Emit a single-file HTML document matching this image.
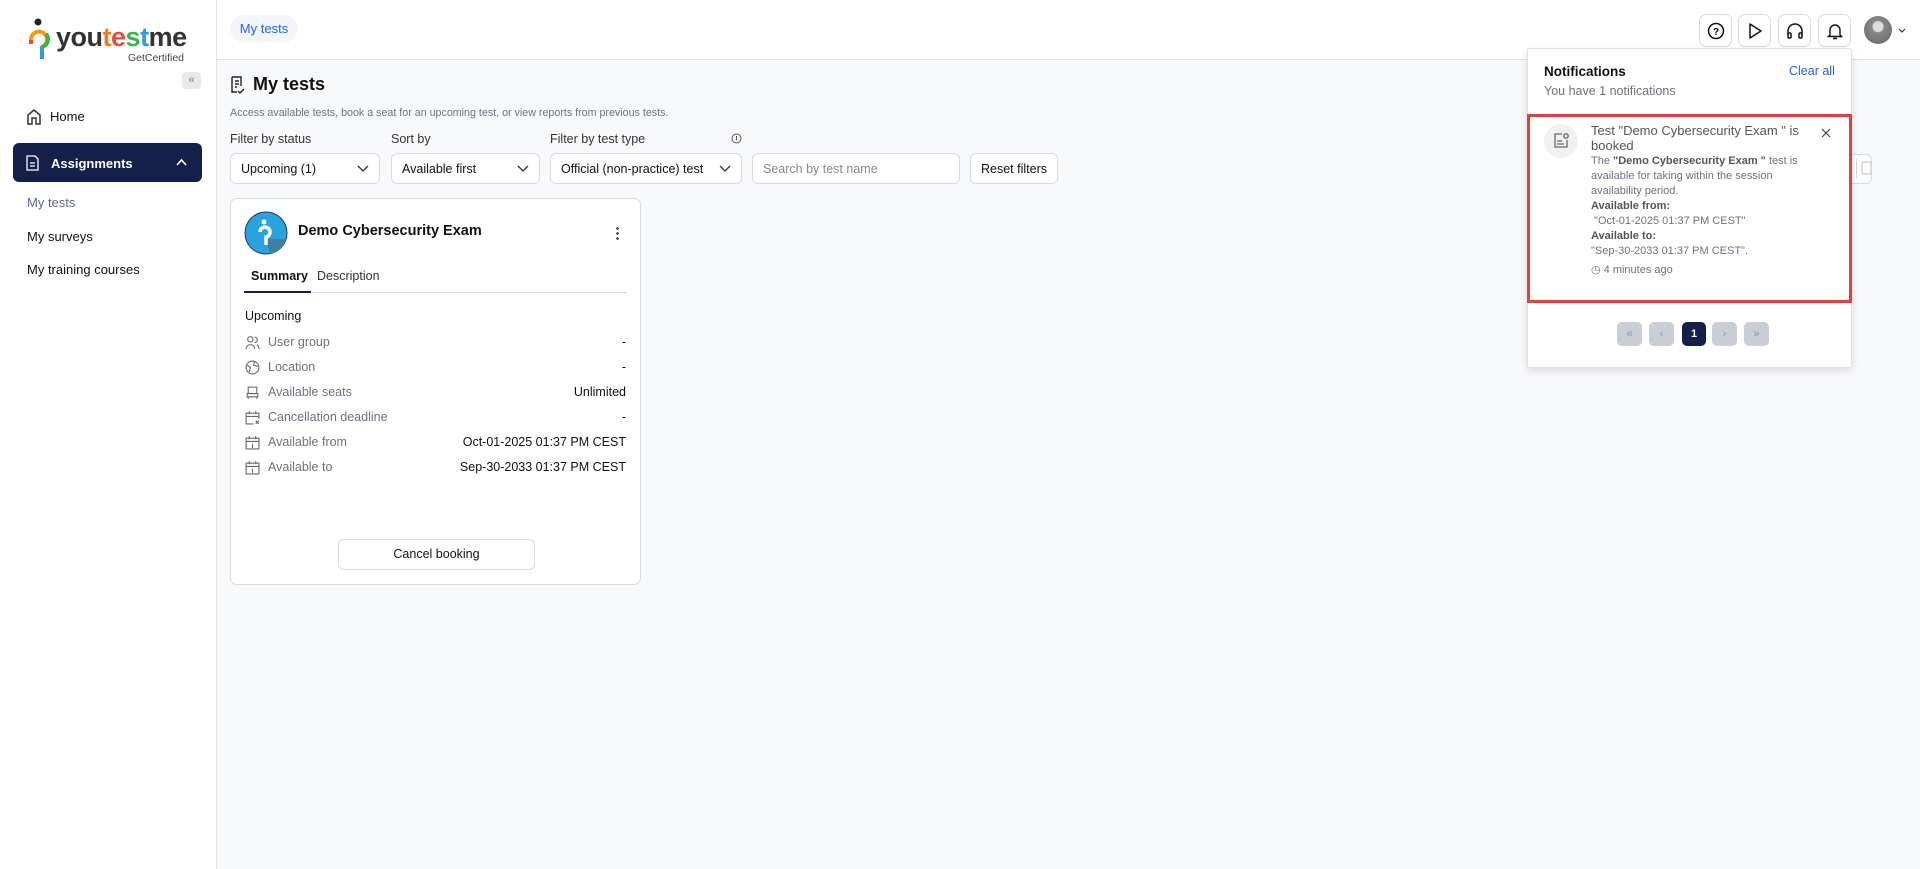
<!DOCTYPE html>
<html><head><meta charset="utf-8"><style>
*{box-sizing:border-box;margin:0;padding:0}
body{width:1920px;height:869px;overflow:hidden;background:#f8f9fb;font-family:"Liberation Sans",sans-serif;color:#111;position:relative}
.abs{position:absolute}
.side{left:0;top:0;width:217px;height:869px;background:#fff;border-right:1px solid #e2e5ea}
.head{left:217px;top:0;width:1703px;height:60px;background:#fff;border-bottom:1px solid #dde1e7}
.nav{font-size:13px;color:#111}
.sel{height:31px;border:1px solid #d5dae1;border-radius:6px;background:#fff;font-size:12.5px;padding:0 10px;display:flex;align-items:center;justify-content:space-between;white-space:nowrap}
.lbl{font-size:12.5px;color:#333}
.row{left:245px;width:381px;height:20px;font-size:12.5px;display:flex;align-items:center}
.row .l{color:#6b7280;margin-left:8px;flex:1}
.row .v{color:#111}
.hb{top:14px;width:33px;height:33px;border:1px solid #d5dae1;border-radius:7px;background:#fff;display:flex;align-items:center;justify-content:center}
.pg{top:322px;width:25px;height:24px;border-radius:5px;background:#c8ced6;display:flex;align-items:center;justify-content:center;color:#8a929c;font-size:11px}
.nt{left:1591px;font-size:11px;color:#6b7280;line-height:15px}
</style></head><body>
<div class="abs side">
  <svg class="abs" style="left:28px;top:18px" width="22" height="46" viewBox="0 0 22 46"><circle cx="10" cy="4" r="3.5" fill="#222"/><path d="M3 22a8 8 0 1 1 11 7v10" fill="none" stroke="#f39c12" stroke-width="4"/><path d="M3 22v4" stroke="#e74c3c" stroke-width="4"/><path d="M14 29v12" stroke="#2e9be6" stroke-width="4"/><path d="M18 16a8 8 0 0 1-4 13" fill="none" stroke="#3cb44b" stroke-width="4"/></svg>
  <div class="abs" style="left:56px;top:22px;font-size:27px;font-weight:bold;letter-spacing:-0.5px;color:#333">you<span style="color:#e67e22">t</span><span style="color:#e74c3c">e</span><span style="color:#3cb44b">s</span><span style="color:#2e9be6">t</span>me</div>
  <div class="abs" style="left:128px;top:52px;font-size:10.5px;color:#444">GetCertified</div>
  <div class="abs" style="left:182px;top:72px;width:19px;height:17px;background:#e6e9ee;border-radius:4px;font-size:11px;color:#777;text-align:center;line-height:16px">«</div>
  <svg class="abs" style="left:26px;top:108px" width="16" height="17" viewBox="0 0 16 17"><path d="M2 16V7l6-5 6 5v9h-4v-6H6v6z" fill="none" stroke="#333" stroke-width="1.5"/></svg>
  <div class="abs nav" style="left:50px;top:109px">Home</div>
  <div class="abs" style="left:13px;top:143px;width:189px;height:39px;background:#14204a;border-radius:6px"></div>
  <svg class="abs" style="left:26px;top:155px" width="13" height="16" viewBox="0 0 13 16"><path d="M1 1h8l3 3v11H1z M4 8h5M4 11h5" fill="none" stroke="#fff" stroke-width="1.3"/></svg>
  <div class="abs" style="left:51px;top:156px;font-size:13px;color:#fff;font-weight:bold">Assignments</div>
  <svg class="abs" style="left:176px;top:158px" width="11" height="8" viewBox="0 0 11 8"><path d="M1 7l4.5-5L10 7" fill="none" stroke="#fff" stroke-width="1.6"/></svg>
  <div class="abs nav" style="left:27px;top:195px;color:#5b6b95">My tests</div>
  <div class="abs nav" style="left:27px;top:229px">My surveys</div>
  <div class="abs nav" style="left:27px;top:262px">My training courses</div>
</div>
<div class="abs head"></div>
<div class="abs" style="left:230px;top:15px;width:68px;height:27px;border-radius:14px;background:#f2f5fa;color:#2563eb;font-size:13px;text-align:center;line-height:27px">My tests</div>
<div class="abs hb" style="left:1699px"><svg width="18" height="18" viewBox="0 0 18 18"><circle cx="9" cy="9" r="7.5" fill="none" stroke="#111" stroke-width="1.5"/><text x="9" y="13" font-size="10" font-weight="bold" text-anchor="middle" font-family="Liberation Sans">?</text></svg></div>
<div class="abs hb" style="left:1738px"><svg width="16" height="18" viewBox="0 0 16 18"><path d="M3 2l11 7-11 7z" fill="none" stroke="#111" stroke-width="1.5" stroke-linejoin="round"/></svg></div>
<div class="abs hb" style="left:1778px"><svg width="18" height="18" viewBox="0 0 18 18"><path d="M2 13V9a7 7 0 0 1 14 0v4" fill="none" stroke="#111" stroke-width="1.5"/><rect x="2" y="11" width="3" height="5" rx="1" fill="none" stroke="#111" stroke-width="1.5"/><rect x="13" y="11" width="3" height="5" rx="1" fill="none" stroke="#111" stroke-width="1.5"/></svg></div>
<div class="abs hb" style="left:1818px"><svg width="16" height="18" viewBox="0 0 16 18"><path d="M3 13V8a5 5 0 0 1 10 0v5l1.5 1.5h-13z M6 16.5h4" fill="none" stroke="#111" stroke-width="1.4"/></svg></div>
<div class="abs" style="left:1864px;top:16px;width:28px;height:28px;border-radius:50%;background:radial-gradient(circle at 50% 38%,#ddd 0 5px,#888 6px,#666)"></div>
<svg class="abs" style="left:1898px;top:28px" width="8" height="5" viewBox="0 0 8 5"><path d="M1 1l3 3 3-3" fill="none" stroke="#333" stroke-width="1.2"/></svg>

<svg class="abs" style="left:230px;top:76px" width="15" height="18" viewBox="0 0 15 18"><path d="M2 1h9v9M2 1v15h5M5 5h4M5 8h4M5 11h2M8 15l2 2 4-4" fill="none" stroke="#222" stroke-width="1.4"/></svg>
<div class="abs" style="left:253px;top:74px;font-size:18px;font-weight:bold">My tests</div>
<div class="abs" style="left:230px;top:107px;font-size:10.7px;color:#6b7280">Access available tests, book a seat for an upcoming test, or view reports from previous tests.</div>
<div class="abs lbl" style="left:230px;top:132px">Filter by status</div>
<div class="abs lbl" style="left:391px;top:132px">Sort by</div>
<div class="abs lbl" style="left:550px;top:132px">Filter by test type</div>
<svg class="abs" style="left:731px;top:133px" width="11" height="11" viewBox="0 0 11 11"><circle cx="5.5" cy="5.5" r="4.5" fill="none" stroke="#555"/><path d="M5.5 3v4" stroke="#555"/></svg>
<div class="abs sel" style="left:230px;top:153px;width:150px">Upcoming (1)<svg width="12" height="7" viewBox="0 0 12 7"><path d="M1 1l5 5 5-5" fill="none" stroke="#333" stroke-width="1.3"/></svg></div>
<div class="abs sel" style="left:391px;top:153px;width:149px">Available first<svg width="12" height="7" viewBox="0 0 12 7"><path d="M1 1l5 5 5-5" fill="none" stroke="#333" stroke-width="1.3"/></svg></div>
<div class="abs sel" style="left:550px;top:153px;width:192px;overflow:hidden"><span style="white-space:nowrap;overflow:hidden;width:150px">Official (non-practice) test</span><svg width="12" height="7" viewBox="0 0 12 7"><path d="M1 1l5 5 5-5" fill="none" stroke="#333" stroke-width="1.3"/></svg></div>
<div class="abs sel" style="left:752px;top:153px;width:208px;color:#888">Search by test name</div>
<div class="abs sel" style="left:970px;top:153px;width:88px;justify-content:center;padding:0">Reset filters</div>
<div class="abs" style="left:1830px;top:154px;width:42px;height:30px;border:1px solid #d5dae1;border-radius:6px;background:#fff"></div>
<div class="abs" style="left:1856px;top:159px;width:1px;height:19px;background:#d5dae1"></div>
<svg class="abs" style="left:1861px;top:160px" width="10" height="16" viewBox="0 0 10 16"><rect x="1" y="2" width="9" height="12" rx="1" fill="none" stroke="#bbb"/></svg>

<div class="abs" style="left:230px;top:198px;width:411px;height:387px;background:#fff;border:1px solid #d5dae1;border-radius:7px"></div>
<svg class="abs" style="left:244px;top:211px" width="44" height="44" viewBox="0 0 44 44"><circle cx="22" cy="22" r="21" fill="#29a3dd" stroke="#1e3a5a" stroke-width="1"/><path d="M22 28L42 28A21 21 0 0 1 26 43z" fill="#3e7fa3"/><circle cx="20" cy="11" r="2.5" fill="#fff"/><path d="M16 21a5 5 0 1 1 6 5v8" fill="none" stroke="#fff" stroke-width="3.5"/></svg>
<div class="abs" style="left:298px;top:223px;font-size:14.5px;font-weight:bold">Demo Cybersecurity Exam</div>
<div class="abs" style="left:616px;top:226px;width:3px;height:14px;background:radial-gradient(circle,#555 1.3px,transparent 1.5px) 0 0/3px 5px"></div>
<div class="abs" style="left:251px;top:269px;font-size:12.5px;font-weight:bold;color:#111">Summary</div>
<div class="abs" style="left:317px;top:269px;font-size:12.5px;color:#333">Description</div>
<div class="abs" style="left:244px;top:292px;width:383px;height:1px;background:#d5dae1"></div>
<div class="abs" style="left:244px;top:291px;width:67px;height:2px;background:#14204a"></div>
<div class="abs" style="left:245px;top:309px;font-size:12.5px;color:#111">Upcoming</div>
<div class="abs row" style="top:332px"><svg width="15" height="15" viewBox="0 0 14 14"><circle cx="5" cy="4" r="2.5" fill="none" stroke="#666"/><path d="M1 13a4 4 0 0 1 8 0M9 2a2.5 2.5 0 0 1 0 5M11 9a4 4 0 0 1 2 4" fill="none" stroke="#666"/></svg><span class="l">User group</span><span class="v">-</span></div>
<div class="abs row" style="top:357px"><svg width="15" height="15" viewBox="0 0 14 14"><circle cx="7" cy="7" r="6" fill="none" stroke="#666"/><path d="M2 5l3 2-1 4M9 1l-1 4 4 1" fill="none" stroke="#666"/></svg><span class="l">Location</span><span class="v">-</span></div>
<div class="abs row" style="top:382px"><svg width="15" height="15" viewBox="0 0 14 14"><path d="M3 8V2h8v6M2 8h10v3H2zM3 11v2M11 11v2" fill="none" stroke="#666"/></svg><span class="l">Available seats</span><span class="v">Unlimited</span></div>
<div class="abs row" style="top:407px"><svg width="15" height="15" viewBox="0 0 14 14"><path d="M8 13H1V3h12v5M1 6h12M4 1v3M10 1v3M10 10l3 3M13 10l-3 3" fill="none" stroke="#666"/></svg><span class="l">Cancellation deadline</span><span class="v">-</span></div>
<div class="abs row" style="top:432px"><svg width="15" height="15" viewBox="0 0 14 14"><path d="M1 3h12v10H1zM1 6h12M4 1v3M10 1v3M7 8v4" fill="none" stroke="#666"/></svg><span class="l">Available from</span><span class="v">Oct-01-2025 01:37 PM CEST</span></div>
<div class="abs row" style="top:457px"><svg width="15" height="15" viewBox="0 0 14 14"><path d="M1 3h12v10H1zM1 6h12M4 1v3M10 1v3M7 8v4" fill="none" stroke="#666"/></svg><span class="l">Available to</span><span class="v">Sep-30-2033 01:37 PM CEST</span></div>
<div class="abs" style="left:338px;top:539px;width:197px;height:31px;border:1px solid #d5dae1;border-radius:6px;background:#fff;font-size:12.5px;text-align:center;line-height:29px">Cancel booking</div>

<div class="abs" style="left:1527px;top:48px;width:325px;height:320px;background:#fff;border:1px solid #dde1e7;border-radius:3px;box-shadow:0 3px 8px rgba(0,0,0,.12)"></div>
<div class="abs" style="left:1544px;top:64px;font-size:13.5px;font-weight:bold">Notifications</div>
<div class="abs" style="left:1789px;top:64px;font-size:12.5px;color:#2563eb">Clear all</div>
<div class="abs" style="left:1544px;top:84px;font-size:12.5px;color:#6b7280">You have 1 notifications</div>
<div class="abs" style="left:1527px;top:114px;width:325px;height:189px;border:3px solid #e53e3e"></div>
<div class="abs" style="left:1544px;top:124px;width:34px;height:34px;border-radius:50%;background:#f0f1f3"></div>
<svg class="abs" style="left:1552px;top:132px" width="18" height="18" viewBox="0 0 18 18"><path d="M10 2H3v13h12V8M5 9h5M5 12h7" fill="none" stroke="#666" stroke-width="1.3"/><circle cx="14" cy="4" r="2.2" fill="none" stroke="#666" stroke-width="1.3"/></svg>
<div class="abs" style="left:1591px;top:123px;width:230px;font-size:13px;color:#555;line-height:15px">Test "Demo Cybersecurity Exam " is booked</div>
<svg class="abs" style="left:1821px;top:128px" width="10" height="10" viewBox="0 0 10 10"><path d="M1 1l8 8M9 1l-8 8" stroke="#444" stroke-width="1.2"/></svg>
<div class="abs nt" style="top:154px;width:210px">The <b style="color:#555">"Demo Cybersecurity Exam "</b> test is available for taking within the session availability period.<br><b style="color:#555">Available from:</b><br>&nbsp;"Oct-01-2025 01:37 PM CEST"<br><b style="color:#555">Available to:</b><br>"Sep-30-2033 01:37 PM CEST".</div>
<div class="abs nt" style="top:263px">◷ 4 minutes ago</div>
<div class="abs pg" style="left:1617px">«</div>
<div class="abs pg" style="left:1649px">‹</div>
<div class="abs pg" style="left:1682px;background:#14204a;color:#fff;font-weight:bold;width:24px">1</div>
<div class="abs pg" style="left:1712px">›</div>
<div class="abs pg" style="left:1744px">»</div>
</body></html>
